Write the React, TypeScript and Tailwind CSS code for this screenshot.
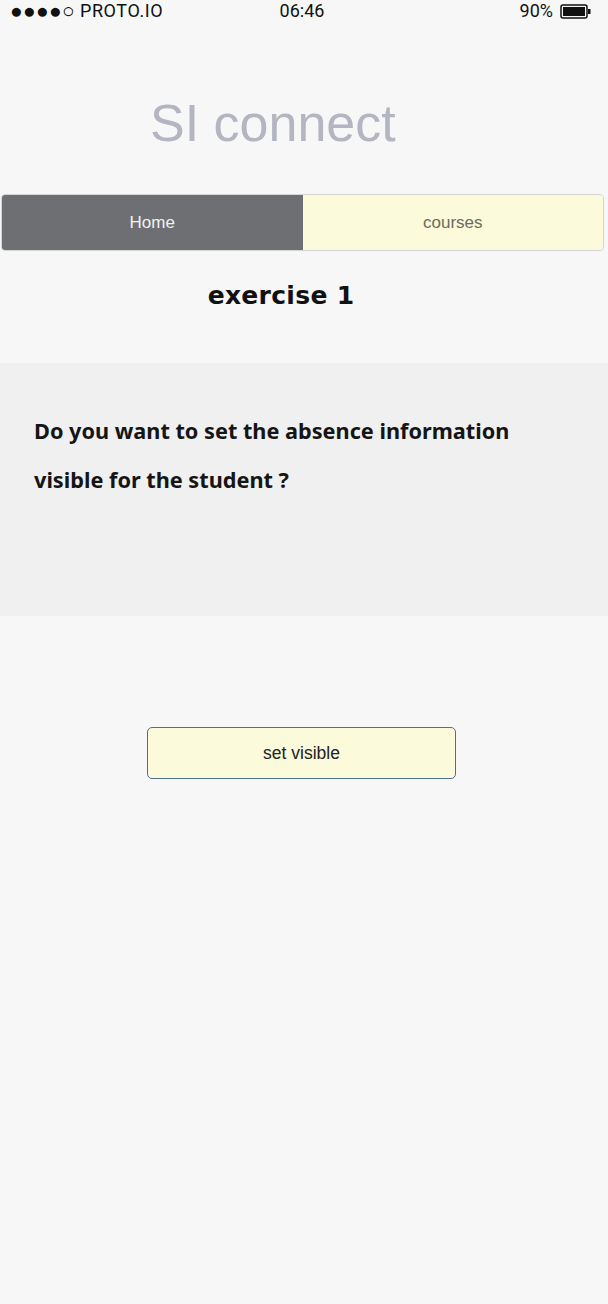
import { ReactNode } from "react"

const StatusBar = () => (
  <div className="flex h-[22px] items-center justify-between px-[10px] text-[18px] leading-none text-[#111]" style={{ fontFamily: "Roboto, 'Liberation Sans', sans-serif" }}>
    <div className="flex w-[200px] items-center gap-[5px]">
      <span className="text-[21px] tracking-[0.3px]">●●●●○</span>
      <span className="tracking-[0.6px]">PROTO.IO</span>
    </div>
    <span className="ml-[-4px]">06:46</span>
    <div className="flex w-[200px] items-center justify-end gap-[7px] pr-[7px]">
      <span>90%</span>
      <svg width="31" height="15" viewBox="0 0 31 15">
        <rect x="1" y="1" width="26" height="13" rx="2" fill="none" stroke="#111" strokeWidth="1.5" />
        <rect x="3" y="3" width="22" height="9" fill="#111" />
        <rect x="28" y="5" width="2.5" height="5" fill="#111" />
      </svg>
    </div>
  </div>
)

const Tab = ({ active, children }: { active?: boolean; children: ReactNode }) => (
  <div
    className={
      active
        ? "flex flex-1 items-center justify-center bg-[#6d6f73] text-[#f2f2f2]"
        : "flex flex-1 items-center justify-center bg-[#fbfadb] text-[#6b6b60]"
    }
  >
    {children}
  </div>
)

export default function App() {
  return (
    <div className="min-h-[1304px] w-[608px] bg-[#f7f7f7]">
      <StatusBar />

      <div className="flex h-[172px] items-center pl-[150px] pt-[30px]">
        <h1 className="text-[52px] leading-none text-[#b3b5c1]" style={{ fontFamily: "'Liberation Sans', Arial, sans-serif" }}>
          SI connect
        </h1>
      </div>

      <div
        className="mx-[1px] flex h-[57px] w-[603px] overflow-hidden rounded-[4px] border border-[#d4d4d4] text-[17px]"
        style={{ fontFamily: "'Liberation Sans', Arial, sans-serif" }}
      >
        <Tab active>Home</Tab>
        <Tab>courses</Tab>
      </div>

      <div className="flex h-[112px] justify-center pr-[46px] pt-[32px]">
        <h2 className="text-[25px] font-bold leading-none tracking-[0.3px] text-[#111]" style={{ fontFamily: "'DejaVu Sans', sans-serif" }}>
          exercise 1
        </h2>
      </div>

      <section className="h-[253px] bg-[#f0f0f0] px-[34px] pt-[43px]" style={{ fontFamily: "'Noto Sans', 'Open Sans', sans-serif" }}>
        <p className="text-[21.7px] font-bold leading-[49px] text-[#151515]">
          Do you want to set the absence information
          <br />
          visible for the student ?
        </p>
      </section>

      <div className="flex pl-[147px] pt-[111px]">
        <button
          className="h-[52px] w-[309px] rounded-[5px] border border-[#4f6f8f] bg-[#fbfadb] text-[17.5px] text-[#222]"
          style={{ fontFamily: "'Liberation Sans', Arial, sans-serif" }}
        >
          set visible
        </button>
      </div>
    </div>
  )
}
